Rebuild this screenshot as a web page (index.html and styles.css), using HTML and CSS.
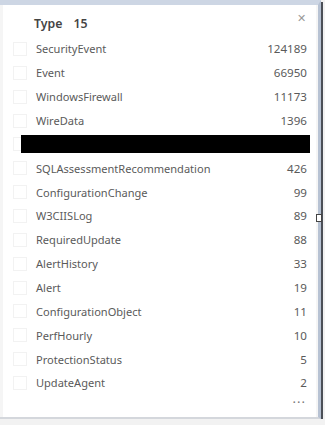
FILE: index.html
```html
<!DOCTYPE html>
<html lang="en">
<head>
<meta charset="UTF-8">
<meta name="viewport" content="width=device-width, initial-scale=1.0">
<title>Type filter</title>
<link rel="stylesheet" href="styles.css">
</head>
<body>

<div class="window">
  <div class="panel">
    <div class="header">
      <span class="title">Type</span>
      <span class="count">15</span>
      <span class="close">&#x2715;</span>
    </div>

    <ul class="list">
      <li class="row"><span class="box"></span><span class="name">SecurityEvent</span><span class="num">124189</span></li>
      <li class="row"><span class="box"></span><span class="name">Event</span><span class="num">66950</span></li>
      <li class="row"><span class="box"></span><span class="name">WindowsFirewall</span><span class="num">11173</span></li>
      <li class="row"><span class="box"></span><span class="name">WireData</span><span class="num">1396</span></li>
      <li class="row"><span class="box"></span><span class="name"></span><span class="num"></span><span class="redact"></span></li>
      <li class="row"><span class="box"></span><span class="name">SQLAssessmentRecommendation</span><span class="num">426</span></li>
      <li class="row"><span class="box"></span><span class="name">ConfigurationChange</span><span class="num">99</span></li>
      <li class="row"><span class="box"></span><span class="name">W3CIISLog</span><span class="num">89</span></li>
      <li class="row"><span class="box"></span><span class="name">RequiredUpdate</span><span class="num">88</span></li>
      <li class="row"><span class="box"></span><span class="name">AlertHistory</span><span class="num">33</span></li>
      <li class="row"><span class="box"></span><span class="name">Alert</span><span class="num">19</span></li>
      <li class="row"><span class="box"></span><span class="name">ConfigurationObject</span><span class="num">11</span></li>
      <li class="row"><span class="box"></span><span class="name">PerfHourly</span><span class="num">10</span></li>
      <li class="row"><span class="box"></span><span class="name">ProtectionStatus</span><span class="num">5</span></li>
      <li class="row"><span class="box"></span><span class="name">UpdateAgent</span><span class="num">2</span></li>
    </ul>

    <div class="more">&middot;&middot;&middot;</div>
  </div>
  <span class="grip"></span>
</div>

</body>
</html>
```

FILE: styles.css
```css
body {
  margin: 0;
  background: #f2f2f2;
  font-family: "Noto Sans", "Open Sans", sans-serif;
}
.window {
  position: relative;
  width: 318px;
  height: 412px;
  background: #f5f5f5;
  border-top: 5px solid #cdd6e4;
  border-right: 3px solid #b7c2d3;
  border-bottom: 2px solid #d4d7dc;
  box-shadow: 2px 2px 0 #4b4f57;
}
.panel {
  margin-left: 3px;
  width: 313px;
  height: 412px;
  box-sizing: border-box;
  padding: 8px 9px 0 10px;
  background: #fff;
}
.header {
  display: flex;
  align-items: center;
  height: 20px;
  margin-bottom: 4px;
  padding-left: 21px;
  color: #444;
  font-size: 12.3px;
  font-weight: 600;
}
.count {
  margin-left: 11px;
}
.close {
  margin-left: auto;
  margin-top: -10px;
  margin-right: 1px;
  color: #999;
  font-size: 10.5px;
  font-weight: 400;
}
.list {
  list-style: none;
  margin: 0;
  padding: 0;
}
.row {
  position: relative;
  display: flex;
  align-items: center;
  height: 23.86px;
  color: #5a5a5a;
  font-size: 11.05px;
}
.box {
  width: 12px;
  height: 12px;
  border: 1px solid #f2f2f2;
  margin-right: 9px;
  flex: none;
}
.name {
  flex: 1;
}
.num {
  font-size: 11.6px;
}
.redact {
  position: absolute;
  left: 8px;
  top: 3px;
  width: 289px;
  height: 18px;
  background: #000;
}
.more {
  text-align: right;
  padding-right: 1px;
  color: #777;
  font-size: 13px;
  letter-spacing: 1px;
  line-height: 10px;
  margin-top: 2px;
}
.grip {
  position: absolute;
  right: -4px;
  top: 209px;
  width: 4px;
  height: 6px;
  background: #fff;
  border: 1px solid #444;
}
```
